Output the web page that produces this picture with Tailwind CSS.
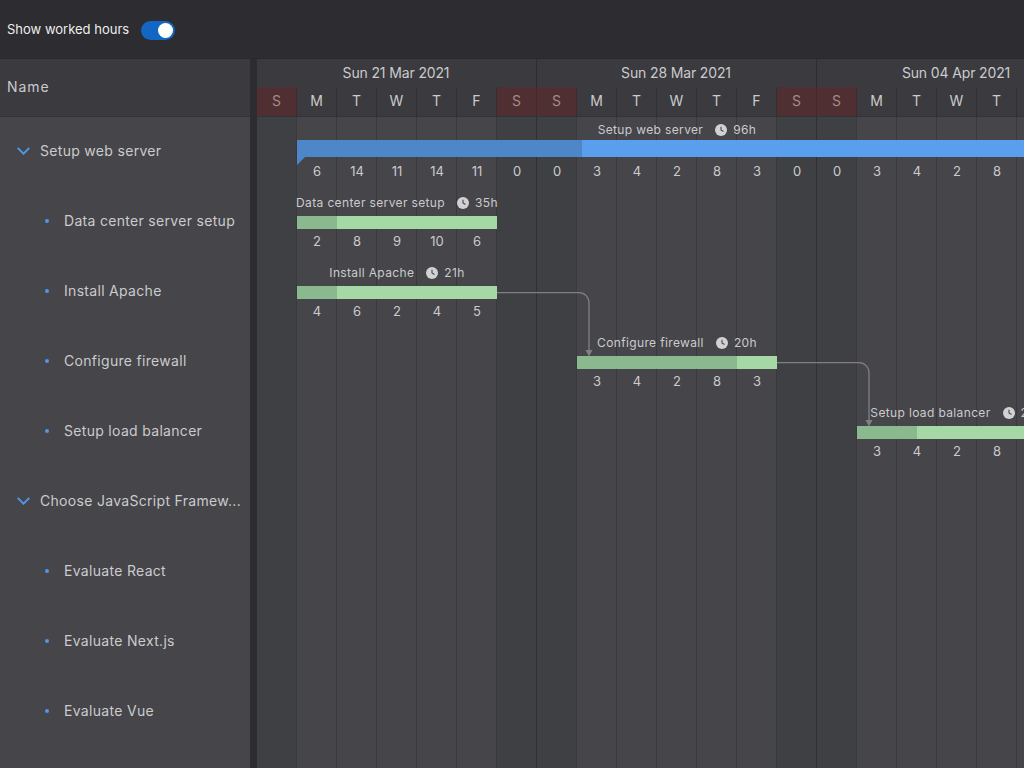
<!DOCTYPE html>
<html lang="en">
<head>
  <meta charset="UTF-8">
  <meta name="viewport" content="width=device-width, initial-scale=1.0">
  <title>Gantt</title>
  <script src="https://cdn.jsdelivr.net/npm/@tailwindcss/browser@4"></script>
</head>
<body class="bg-[#2c2c31] font-['Inter',sans-serif] overflow-hidden">
  <div class="flex flex-col h-[768px] w-[1024px] overflow-hidden">
    <!-- toolbar -->
    <div class="flex items-center h-[59px] shrink-0 pl-[7px] pt-[2px] gap-3 bg-[#2c2c31] border-b border-[#29292d]">
      <span class="text-[13px] text-[#eeeeee]">Show worked hours</span>
      <div class="relative w-[34px] h-[19px] rounded-full bg-[#1266c4]">
        <div class="absolute right-[2px] top-[2px] w-[15px] h-[15px] rounded-full bg-white"></div>
      </div>
    </div>

    <div class="flex flex-1 min-h-0">
      <!-- task list -->
      <div class="w-[250px] shrink-0 bg-[#45454a] text-[#cbcbcd] text-[14px] tracking-[0.022em]">
        <div class="flex items-center h-[58px] pl-[7px] pb-[3px] tracking-[0.07em] bg-[#3a3a3f] border-b border-[#333337]">Name</div>
        <div class="flex items-center h-[70px] -mt-px pl-[17px] gap-[10px] whitespace-nowrap">
          <svg class="w-[13px] h-[8px] shrink-0" viewBox="0 0 13 8" fill="none" stroke="#4f98e6" stroke-width="1.9"><path d="M.7.9l5.800 5.800L12.300.9"/></svg>
          <span class="pb-[2px]">Setup web server</span>
        </div>
        <div class="flex items-center h-[70px] pl-[44.5px] gap-[15.5px]"><span class="w-1 h-1 rounded-full bg-[#4f98e6]"></span><span class="pb-[2px]">Data center server setup</span></div>
        <div class="flex items-center h-[70px] pl-[44.5px] gap-[15.5px]"><span class="w-1 h-1 rounded-full bg-[#4f98e6]"></span><span class="pb-[2px]">Install Apache</span></div>
        <div class="flex items-center h-[70px] pl-[44.5px] gap-[15.5px]"><span class="w-1 h-1 rounded-full bg-[#4f98e6]"></span><span class="pb-[2px]">Configure firewall</span></div>
        <div class="flex items-center h-[70px] pl-[44.5px] gap-[15.5px]"><span class="w-1 h-1 rounded-full bg-[#4f98e6]"></span><span class="pb-[2px]">Setup load balancer</span></div>
        <div class="flex items-center h-[70px] pl-[17px] gap-[10px] whitespace-nowrap">
          <svg class="w-[13px] h-[8px] shrink-0" viewBox="0 0 13 8" fill="none" stroke="#4f98e6" stroke-width="1.9"><path d="M.7.9l5.800 5.800L12.300.9"/></svg>
          <span class="pb-[2px]">Choose JavaScript Framew...</span>
        </div>
        <div class="flex items-center h-[70px] pl-[44.5px] gap-[15.5px]"><span class="w-1 h-1 rounded-full bg-[#4f98e6]"></span><span class="pb-[2px]">Evaluate React</span></div>
        <div class="flex items-center h-[70px] pl-[44.5px] gap-[15.5px]"><span class="w-1 h-1 rounded-full bg-[#4f98e6]"></span><span class="pb-[2px]">Evaluate Next.js</span></div>
        <div class="flex items-center h-[70px] pl-[44.5px] gap-[15.5px]"><span class="w-1 h-1 rounded-full bg-[#4f98e6]"></span><span class="pb-[2px]">Evaluate Vue</span></div>
      </div>

      <div class="w-[7px] shrink-0 bg-[#2c2c31]"></div>

      <!-- timeline -->
      <div class="flex-1 min-w-0 flex flex-col overflow-hidden">
        <div class="flex w-[840px] h-[28px] pb-[2px] shrink-0 bg-[#3a3a3f] text-[14px] tracking-[-0.01em] text-[#cbcbcd]">
          <div class="w-[280px] shrink-0 flex items-center justify-center relative pr-[2px] after:absolute after:right-0 after:top-0 after:h-[30px] after:w-px after:bg-[#2c2c31]">Sun 21 Mar 2021</div>
          <div class="w-[280px] shrink-0 flex items-center justify-center relative pr-[2px] after:absolute after:right-0 after:top-0 after:h-[30px] after:w-px after:bg-[#2c2c31]">Sun 28 Mar 2021</div>
          <div class="w-[280px] shrink-0 flex items-center justify-center pr-[2px]">Sun 04 Apr 2021</div>
        </div>
        <div class="flex w-[800px] h-[30px] shrink-0 bg-[#3a3a3f] border-b border-[#333337] text-[14px] text-[#cbcbcd] text-center">
          <div class="w-10 shrink-0 leading-[27px] bg-[#4f2f32] text-[#a58a8d] border-r border-[#44292c]">S</div>
          <div class="w-10 shrink-0 leading-[27px] border-r border-[#303034]">M</div>
          <div class="w-10 shrink-0 leading-[27px] border-r border-[#303034]">T</div>
          <div class="w-10 shrink-0 leading-[27px] border-r border-[#303034]">W</div>
          <div class="w-10 shrink-0 leading-[27px] border-r border-[#303034]">T</div>
          <div class="w-10 shrink-0 leading-[27px] border-r border-[#303034]">F</div>
          <div class="w-10 shrink-0 leading-[27px] bg-[#4f2f32] text-[#a58a8d] border-r border-[#44292c]">S</div>
          <div class="w-10 shrink-0 leading-[27px] bg-[#4f2f32] text-[#a58a8d] border-r border-[#44292c]">S</div>
          <div class="w-10 shrink-0 leading-[27px] border-r border-[#303034]">M</div>
          <div class="w-10 shrink-0 leading-[27px] border-r border-[#303034]">T</div>
          <div class="w-10 shrink-0 leading-[27px] border-r border-[#303034]">W</div>
          <div class="w-10 shrink-0 leading-[27px] border-r border-[#303034]">T</div>
          <div class="w-10 shrink-0 leading-[27px] border-r border-[#303034]">F</div>
          <div class="w-10 shrink-0 leading-[27px] bg-[#4f2f32] text-[#a58a8d] border-r border-[#44292c]">S</div>
          <div class="w-10 shrink-0 leading-[27px] bg-[#4f2f32] text-[#a58a8d] border-r border-[#44292c]">S</div>
          <div class="w-10 shrink-0 leading-[27px] border-r border-[#303034]">M</div>
          <div class="w-10 shrink-0 leading-[27px] border-r border-[#303034]">T</div>
          <div class="w-10 shrink-0 leading-[27px] border-r border-[#303034]">W</div>
          <div class="w-10 shrink-0 leading-[27px] border-r border-[#303034]">T</div>
          <div class="w-10 shrink-0 leading-[27px] border-r border-[#303034]">F</div>
        </div>

        <div class="relative flex-1 min-h-0 text-[#cbcbcd] text-[12px] tracking-[0.03em]">
          <!-- day columns -->
          <div class="flex w-[800px] h-full">
            <div class="w-10 bg-[#3f4043] border-r border-[#3a3a3e]"></div>
            <div class="w-10 bg-[#45454a] border-r border-[#3a3a3e]"></div>
            <div class="w-10 bg-[#45454a] border-r border-[#3a3a3e]"></div>
            <div class="w-10 bg-[#45454a] border-r border-[#3a3a3e]"></div>
            <div class="w-10 bg-[#45454a] border-r border-[#3a3a3e]"></div>
            <div class="w-10 bg-[#45454a] border-r border-[#3a3a3e]"></div>
            <div class="w-10 bg-[#3f4043] border-r border-[#303034]"></div>
            <div class="w-10 bg-[#3f4043] border-r border-[#3a3a3e]"></div>
            <div class="w-10 bg-[#45454a] border-r border-[#3a3a3e]"></div>
            <div class="w-10 bg-[#45454a] border-r border-[#3a3a3e]"></div>
            <div class="w-10 bg-[#45454a] border-r border-[#3a3a3e]"></div>
            <div class="w-10 bg-[#45454a] border-r border-[#3a3a3e]"></div>
            <div class="w-10 bg-[#45454a] border-r border-[#3a3a3e]"></div>
            <div class="w-10 bg-[#3f4043] border-r border-[#303034]"></div>
            <div class="w-10 bg-[#3f4043] border-r border-[#3a3a3e]"></div>
            <div class="w-10 bg-[#45454a] border-r border-[#3a3a3e]"></div>
            <div class="w-10 bg-[#45454a] border-r border-[#3a3a3e]"></div>
            <div class="w-10 bg-[#45454a] border-r border-[#3a3a3e]"></div>
            <div class="w-10 bg-[#45454a] border-r border-[#3a3a3e]"></div>
            <div class="w-10 bg-[#45454a] border-r border-[#3a3a3e]"></div>
          </div>

          <!-- dependency links -->
          <svg class="absolute left-0 top-0 w-[800px] h-[340px]" viewBox="0 0 800 340" fill="none">
            <path d="M240 175.700H322a10 10 0 0 1 10 10V234" stroke="#808084" stroke-width="1.300"/>
            <path d="M328.500 233h7l-3.500 6.500z" fill="#808084"/>
            <path d="M520 245.700H602a10 10 0 0 1 10 10V304" stroke="#808084" stroke-width="1.300"/>
            <path d="M608.500 303h7l-3.500 6.500z" fill="#808084"/>
          </svg>

          <!-- Setup web server -->
          <div class="absolute left-10 top-[3px] w-[760px]">
            <div class="flex items-center justify-center h-5 whitespace-nowrap">
              <span>Setup web server</span>
              <svg class="w-3 h-3 ml-3 mr-1.5" viewBox="0 0 12 12"><circle cx="6" cy="6" r="6" fill="#d2d2d4"/><path d="M6 2.800V6l2.500 1.500" fill="none" stroke="#45454a" stroke-width="1.100"/></svg>
              <span>96h</span>
            </div>
            <div class="relative h-[17px] bg-[#5a9fee]">
              <div class="w-[285px] h-full bg-[#4d87c9]"></div>
              <svg class="absolute left-0 top-[17px] w-2 h-2" viewBox="0 0 8 8"><path d="M0 0h8L0 8z" fill="#4d87c9"/></svg>
            </div>
            <div class="flex h-[30px] items-center text-center text-[13px] tracking-normal">
              <span class="w-10 shrink-0">6</span><span class="w-10 shrink-0">14</span><span class="w-10 shrink-0">11</span><span class="w-10 shrink-0">14</span><span class="w-10 shrink-0">11</span><span class="w-10 shrink-0">0</span><span class="w-10 shrink-0">0</span><span class="w-10 shrink-0">3</span><span class="w-10 shrink-0">4</span><span class="w-10 shrink-0">2</span><span class="w-10 shrink-0">8</span><span class="w-10 shrink-0">3</span><span class="w-10 shrink-0">0</span><span class="w-10 shrink-0">0</span><span class="w-10 shrink-0">3</span><span class="w-10 shrink-0">4</span><span class="w-10 shrink-0">2</span><span class="w-10 shrink-0">8</span><span class="w-10 shrink-0">3</span>
            </div>
          </div>

          <!-- Data center server setup -->
          <div class="absolute left-10 top-[76px] w-[200px]">
            <div class="flex items-center justify-center h-5 whitespace-nowrap">
              <span>Data center server setup</span>
              <svg class="w-3 h-3 ml-3 mr-1.5 shrink-0" viewBox="0 0 12 12"><circle cx="6" cy="6" r="6" fill="#d2d2d4"/><path d="M6 2.800V6l2.500 1.500" fill="none" stroke="#45454a" stroke-width="1.100"/></svg>
              <span>35h</span>
            </div>
            <div class="flex h-[13px] mt-[3px] bg-[#a5d8a5]"><div class="w-10 bg-[#8ab88f]"></div></div>
            <div class="flex h-[26px] items-center text-center text-[13px] tracking-normal">
              <span class="w-10">2</span><span class="w-10">8</span><span class="w-10">9</span><span class="w-10">10</span><span class="w-10">6</span>
            </div>
          </div>

          <!-- Install Apache -->
          <div class="absolute left-10 top-[146px] w-[200px]">
            <div class="flex items-center justify-center h-5 whitespace-nowrap">
              <span>Install Apache</span>
              <svg class="w-3 h-3 ml-3 mr-1.5 shrink-0" viewBox="0 0 12 12"><circle cx="6" cy="6" r="6" fill="#d2d2d4"/><path d="M6 2.800V6l2.500 1.500" fill="none" stroke="#45454a" stroke-width="1.100"/></svg>
              <span>21h</span>
            </div>
            <div class="flex h-[13px] mt-[3px] bg-[#a5d8a5]"><div class="w-10 bg-[#8ab88f]"></div></div>
            <div class="flex h-[26px] items-center text-center text-[13px] tracking-normal">
              <span class="w-10">4</span><span class="w-10">6</span><span class="w-10">2</span><span class="w-10">4</span><span class="w-10">5</span>
            </div>
          </div>

          <!-- Configure firewall -->
          <div class="absolute left-[320px] top-[216px] w-[200px]">
            <div class="flex items-center justify-center h-5 whitespace-nowrap">
              <span>Configure firewall</span>
              <svg class="w-3 h-3 ml-3 mr-1.5 shrink-0" viewBox="0 0 12 12"><circle cx="6" cy="6" r="6" fill="#d2d2d4"/><path d="M6 2.800V6l2.500 1.500" fill="none" stroke="#45454a" stroke-width="1.100"/></svg>
              <span>20h</span>
            </div>
            <div class="flex h-[13px] mt-[3px] bg-[#a5d8a5]"><div class="w-40 bg-[#8ab88f]"></div></div>
            <div class="flex h-[26px] items-center text-center text-[13px] tracking-normal">
              <span class="w-10">3</span><span class="w-10">4</span><span class="w-10">2</span><span class="w-10">8</span><span class="w-10">3</span>
            </div>
          </div>

          <!-- Setup load balancer -->
          <div class="absolute left-[600px] top-[286px] w-[200px]">
            <div class="flex items-center justify-center h-5 whitespace-nowrap">
              <span>Setup load balancer</span>
              <svg class="w-3 h-3 ml-3 mr-1.5 shrink-0" viewBox="0 0 12 12"><circle cx="6" cy="6" r="6" fill="#d2d2d4"/><path d="M6 2.800V6l2.500 1.500" fill="none" stroke="#45454a" stroke-width="1.100"/></svg>
              <span>20h</span>
            </div>
            <div class="flex h-[13px] mt-[3px] bg-[#a5d8a5]"><div class="w-[60px] bg-[#8ab88f]"></div></div>
            <div class="flex h-[26px] items-center text-center text-[13px] tracking-normal">
              <span class="w-10">3</span><span class="w-10">4</span><span class="w-10">2</span><span class="w-10">8</span><span class="w-10">3</span>
            </div>
          </div>
        </div>
      </div>
    </div>
  </div>
</body>
</html>
